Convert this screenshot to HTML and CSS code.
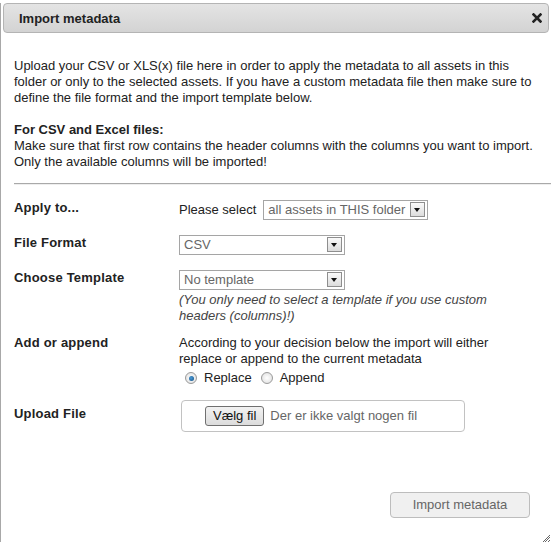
FILE: index.html
```html
<!DOCTYPE html>
<html>
<head>
<meta charset="utf-8">
<link rel="stylesheet" href="styles.css">
</head>
<body>
<div class="dialog">
  <div class="titlebar">
    <span class="title">Import metadata</span>
    <svg class="close" width="10" height="10" viewBox="0 0 10 10"><path d="M1.5 1.5 L8.5 8.5 M8.5 1.5 L1.5 8.5" stroke="#222" stroke-width="2.6" stroke-linecap="square"/></svg>
  </div>
  <div class="content">
    <p class="intro">Upload your CSV or XLS(x) file here in order to apply the metadata to all assets in this folder or only to the selected assets. If you have a custom metadata file then make sure to define the file format and the import template below.</p>
    <p class="intro"><b>For CSV and Excel files:</b><br>Make sure that first row contains the header columns with the columns you want to import. Only the available columns will be imported!</p>
    <div class="rule"></div>
    <div class="form">
      <div class="row r1">
        <div class="label">Apply to...</div>
        <div class="ctrl inline"><span class="please">Please select</span><span class="select s-wide"><span class="val">all assets in THIS folder</span><span class="arrow"></span></span></div>
      </div>
      <div class="row r2">
        <div class="label">File Format</div>
        <div class="ctrl"><span class="select s-med"><span class="val">CSV</span><span class="arrow"></span></span></div>
      </div>
      <div class="row r3">
        <div class="label">Choose Template</div>
        <div class="ctrl"><span class="select s-med"><span class="val">No template</span><span class="arrow"></span></span>
          <p class="note">(You only need to select a template if you use custom headers (columns)!)</p>
        </div>
      </div>
      <div class="row r4">
        <div class="label">Add or append</div>
        <div class="ctrl">
          <p class="desc">According to your decision below the import will either replace or append to the current metadata</p>
          <div class="radios">
            <span class="radio checked"></span><span class="rlabel">Replace</span>
            <span class="radio"></span><span class="rlabel">Append</span>
          </div>
        </div>
      </div>
      <div class="row r5">
        <div class="label lbl-upload">Upload File</div>
        <div class="ctrl"><div class="filebox"><span class="filebtn">Vælg fil</span><span class="filetext">Der er ikke valgt nogen fil</span></div></div>
      </div>
    </div>
    <div class="footer"><span class="importbtn">Import metadata</span></div>
  </div>
  <svg class="grip" width="12" height="12" viewBox="0 0 12 12"><path d="M11 2 L2 11 M11 4 L4 11 M11 7 L7 11 M11 9 L9 11" stroke="#666" stroke-width="1"/></svg>
</div>
</body>
</html>
```
FILE: styles.css
```css
html, body { margin: 0; padding: 0; background: #fff; }
body { font-family: "Liberation Sans", Arial, sans-serif; font-size: 13px; color: #222; width: 551px; height: 542px; overflow: hidden; }
.dialog { position: relative; height: 542px; border-left: 1px solid #a8a8a8; box-sizing: border-box; }
.titlebar { margin: 3px 2px 0 2px; height: 28px; border: 1px solid #b4b4b4; border-radius: 4px; background: linear-gradient(#e4e4e4, #d3d3d3); display: flex; align-items: center; justify-content: space-between; padding: 0 6px 0 15px; }
.title { font-weight: bold; font-size: 13px; color: #222; }
.close { display: block; }
.content { padding: 0 6px 0 13px; }
.intro { margin: 0; line-height: 16px; }
.intro:first-child { margin-top: 25px; }
.intro + .intro { margin-top: 16px; }
.rule { margin-top: 13px; margin-right: -6px; border-top: 1px solid #a9a9a9; border-bottom: 1px solid #eee; }
.form { margin-top: 15px; }
.row { display: grid; grid-template-columns: 165px 1fr; }
.r2, .r3 { margin-top: 15px; }
.r4 { margin-top: 11px; }
.r5 { margin-top: 14px; }
.label { font-weight: bold; line-height: 16px; font-size: 13px; color: #222; letter-spacing: 0.2px; }
.lbl-upload { padding-top: 6px; }
.ctrl { line-height: 16px; max-width: 320px; }
.inline { display: flex; align-items: center; }
.please { font-size: 13px; margin-right: 7px; }
.select { position: relative; display: inline-block; height: 20px; box-sizing: border-box; border: 1px solid #a5a5a5; background: #fff; vertical-align: top; }
.s-wide { width: 165px; }
.s-med { width: 166px; }
.val { display: block; padding-left: 4px; line-height: 18px; font-size: 13px; color: #666; white-space: nowrap; }
.arrow { position: absolute; right: 2px; top: 1px; width: 15px; height: 15px; box-sizing: border-box; border: 1px solid #8e8e8e; background: linear-gradient(#fafafa, #dcdcdc); }
.arrow::after { content: ""; position: absolute; left: 3px; top: 5px; border-left: 3.5px solid transparent; border-right: 3.5px solid transparent; border-top: 4px solid #111; }
.note { margin: 2px 0 0 0; font-style: italic; color: #444; font-size: 13px; line-height: 16px; }
.desc { margin: 0; line-height: 16px; font-size: 13px; }
.radios { display: flex; align-items: center; margin-top: 3px; height: 16px; padding-left: 6px; }
.radio { width: 12px; height: 12px; box-sizing: border-box; border-radius: 50%; border: 1px solid #9a9a9a; background: radial-gradient(#fff, #dcdcdc); position: relative; }
.radio.checked::after { content: ""; position: absolute; left: 2.5px; top: 2.5px; width: 5px; height: 5px; border-radius: 50%; background: radial-gradient(circle at 40% 40%, #4a9ad8, #134f80); }
.rlabel { font-size: 13px; margin-left: 7px; margin-right: 9px; color: #222; }
.filebox { width: 284px; height: 32px; box-sizing: border-box; margin-left: 2px; border: 1px solid #c2c2c2; border-radius: 4px; display: flex; align-items: center; padding-left: 23px; }
.filebtn { display: inline-block; height: 20px; line-height: 18px; box-sizing: border-box; padding: 0 7px; border: 1px solid #707070; border-radius: 3px; background: linear-gradient(#f2f2f2, #dcdcdc); font-size: 13px; color: #111; }
.filetext { margin-left: 6px; font-size: 13px; color: #666; }
.footer { display: flex; justify-content: flex-end; margin-top: 60px; padding-right: 15px; }
.importbtn { display: inline-block; width: 140px; height: 26px; box-sizing: border-box; border: 1px solid #bdbdbd; border-radius: 4px; background: #f0f0f0; text-align: center; line-height: 24px; font-size: 13px; color: #666; }
.grip { position: absolute; right: 0; bottom: 0; }
```
